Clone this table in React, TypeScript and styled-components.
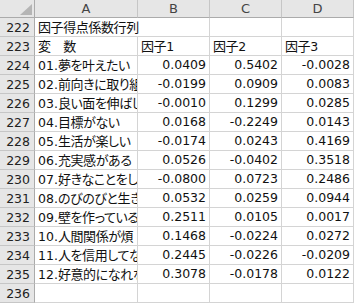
import React from "react";
import styled, { createGlobalStyle } from "styled-components";

type Row = {
  no: number;
  label: string;
  values?: string[];
  kind?: "title" | "head" | "data" | "empty";
};

// labels are cut where the reference's column A clips them
const rows: Row[] = [
  { no: 222, label: "因子得点係数行列", kind: "title" },
  { no: 223, label: "変　数", values: ["因子1", "因子2", "因子3"], kind: "head" },
  { no: 224, label: "01.夢を叶えたい", values: ["0.0409", "0.5402", "-0.0028"] },
  { no: 225, label: "02.前向きに取り組", values: ["-0.0199", "0.0909", "0.0083"] },
  { no: 226, label: "03.良い面を伸ばし", values: ["-0.0010", "0.1299", "0.0285"] },
  { no: 227, label: "04.目標がない", values: ["0.0168", "-0.2249", "0.0143"] },
  { no: 228, label: "05.生活が楽しい", values: ["-0.0174", "0.0243", "0.4169"] },
  { no: 229, label: "06.充実感がある", values: ["0.0526", "-0.0402", "0.3518"] },
  { no: 230, label: "07.好きなことをして", values: ["-0.0800", "0.0723", "0.2486"] },
  { no: 231, label: "08.のびのびと生き", values: ["0.0532", "0.0259", "0.0944"] },
  { no: 232, label: "09.壁を作っている", values: ["0.2511", "0.0105", "0.0017"] },
  { no: 233, label: "10.人間関係が煩", values: ["0.1468", "-0.0224", "0.0272"] },
  { no: 234, label: "11.人を信用してな", values: ["0.2445", "-0.0226", "-0.0209"] },
  { no: 235, label: "12.好意的になれな", values: ["0.3078", "-0.0178", "0.0122"] },
  { no: 236, label: "", kind: "empty" },
];

const columns = ["A", "B", "C", "D"];

// japanese runs get the proportional font, latin runs stay in the cell font
function Mixed({ text }: { text: string }) {
  const parts = text.match(/[\x00-\x7f]+|[^\x00-\x7f]+/g) || [];
  return (
    <>
      {parts.map((p, i) =>
        /^[\x00-\x7f]+$/.test(p) ? <span key={i}>{p}</span> : <Jp key={i}>{p}</Jp>
      )}
    </>
  );
}

export default function App() {
  return (
    <>
      <GlobalStyle />
      <Sheet>
        <Corner>
          <svg width="12" height="11" viewBox="0 0 12 11">
            <polygon points="12,0 12,11 0,11" fill="#b5b5b5" />
          </svg>
        </Corner>
        {columns.map((c) => (
          <ColHeader key={c}>{c}</ColHeader>
        ))}

        {rows.map((r) => (
          <React.Fragment key={r.no}>
            <RowHeader>{r.no}</RowHeader>
            {r.kind === "title" ? (
              <>
                <Cell $overflow>
                  <Mixed text={r.label} />
                </Cell>
                <Cell />
                <Cell />
                <Cell />
              </>
            ) : (
              <>
                <Cell>
                  <Mixed text={r.label} />
                </Cell>
                {[0, 1, 2].map((i) => (
                  <Cell key={i} $num={r.kind !== "head"}>
                    {r.values ? <Mixed text={r.values[i]} /> : null}
                  </Cell>
                ))}
              </>
            )}
          </React.Fragment>
        ))}
      </Sheet>
    </>
  );
}

const GlobalStyle = createGlobalStyle`
  html, body {
    margin: 0;
    padding: 0;
    background: #fff;
  }
  body {
    font-family: "DejaVu Sans", "Noto Sans CJK JP", sans-serif;
    overflow: hidden;
  }
`;

const Sheet = styled.div`
  display: grid;
  grid-template-columns: 35px 103px 72px 72px 72px;
  grid-template-rows: 18px;
  grid-auto-rows: 19px;
  width: 354px;
  height: 303px;
  overflow: hidden;
  background: #fff;
`;

const Corner = styled.div`
  box-sizing: border-box;
  background: #e6e6e6;
  border-right: 1px solid #ababab;
  border-bottom: 1px solid #ababab;
  display: flex;
  align-items: flex-end;
  justify-content: flex-end;
  padding: 0 2px 2px 0;
`;

const ColHeader = styled.div`
  box-sizing: border-box;
  background: #e6e6e6;
  border-right: 1px solid #c6c6c6;
  border-bottom: 1px solid #ababab;
  color: #444;
  font-size: 13px;
  display: flex;
  align-items: center;
  justify-content: center;
`;

const RowHeader = styled.div`
  box-sizing: border-box;
  background: #e6e6e6;
  border-right: 1px solid #ababab;
  border-bottom: 1px solid #c6c6c6;
  color: #222;
  font-size: 12.5px;
  display: flex;
  align-items: center;
  justify-content: flex-end;
  padding-right: 4px;
`;

const Cell = styled.div<{ $num?: boolean; $overflow?: boolean }>`
  box-sizing: border-box;
  border-right: ${(p) => (p.$overflow ? "none" : "1px solid #d4d4d4")};
  border-bottom: 1px solid #d4d4d4;
  color: #111;
  font-size: 12.5px;
  line-height: 18px;
  white-space: nowrap;
  overflow: ${(p) => (p.$overflow ? "visible" : "hidden")};
  position: ${(p) => (p.$overflow ? "relative" : "static")};
  z-index: ${(p) => (p.$overflow ? 1 : 0)};
  text-align: ${(p) => (p.$num ? "right" : "left")};
  padding: ${(p) => (p.$num ? "0 3px 0 0" : "0 0 0 3px")};
`;

const Jp = styled.span`
  font-family: "Noto Sans CJK JP", sans-serif;
  font-size: 13px;
  letter-spacing: -0.4px;
  font-feature-settings: "palt";
`;
